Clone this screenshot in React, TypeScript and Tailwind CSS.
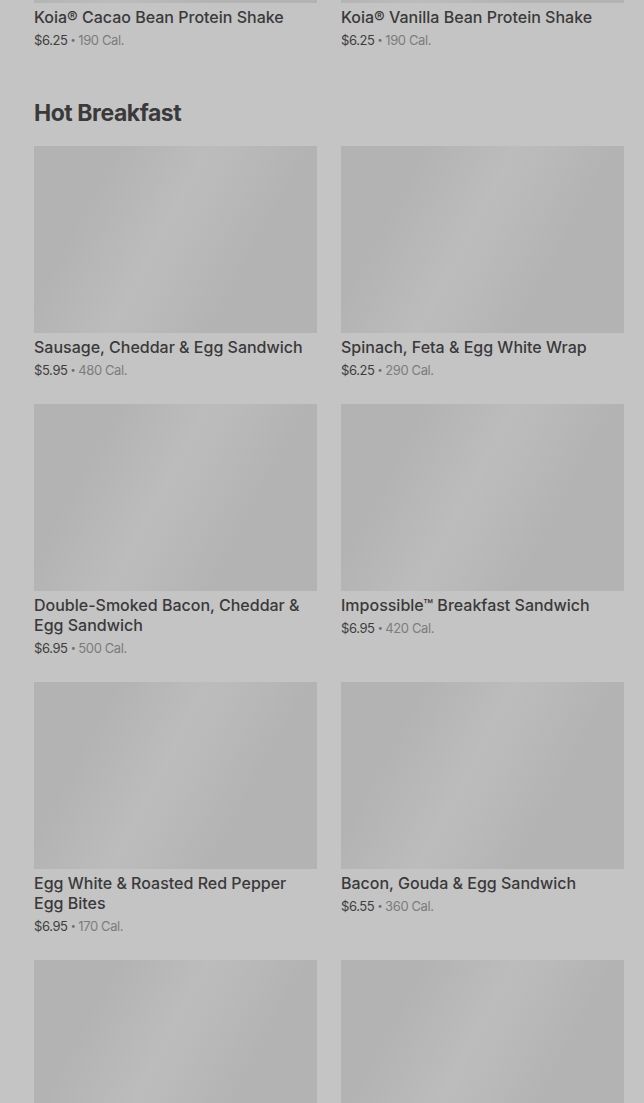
type Item = {
  name: string;
  price: string;
  cal: string;
};

const shakes: Item[] = [
  { name: "Koia® Cacao Bean Protein Shake", price: "$6.25", cal: "190 Cal." },
  { name: "Koia® Vanilla Bean Protein Shake", price: "$6.25", cal: "190 Cal." },
];

const hotBreakfast: Item[] = [
  { name: "Sausage, Cheddar & Egg Sandwich", price: "$5.95", cal: "480 Cal." },
  { name: "Spinach, Feta & Egg White Wrap", price: "$6.25", cal: "290 Cal." },
  { name: "Double-Smoked Bacon, Cheddar & Egg Sandwich", price: "$6.95", cal: "500 Cal." },
  { name: "Impossible™ Breakfast Sandwich", price: "$6.95", cal: "420 Cal." },
  { name: "Egg White & Roasted Red Pepper Egg Bites", price: "$6.95", cal: "170 Cal." },
  { name: "Bacon, Gouda & Egg Sandwich", price: "$6.55", cal: "360 Cal." },
];

function Thumb() {
  return (
    <div className="h-[187px] w-full bg-[linear-gradient(118deg,#b3b3b3_22%,#bcbcbc_46%,#b9b9b9_56%,#b3b3b3_72%)]" />
  );
}

function ItemCard({ item }: { item: Item }) {
  return (
    <div className="flex flex-col">
      <Thumb />
      <p className="mt-1 text-[16px] font-medium leading-5 text-[#3a3a3a]">{item.name}</p>
      <p className="mt-[3px] flex items-center text-[13px] leading-5 tracking-[-0.03em] text-[#3e3e3e]">
        <span>{item.price}</span>
        <span className="mx-[3px] text-[9px] text-[#6e6e6e]">•</span>
        <span className="text-[#7c7c7c]">{item.cal}</span>
      </p>
    </div>
  );
}

export default function App() {
  return (
    <div
      className="min-h-screen overflow-hidden bg-[#c4c4c4] pl-[34px] pr-5"
      style={{ fontFamily: "Inter, 'Noto Sans', sans-serif" }}
    >
      <div className="-mt-[184px] grid grid-cols-2 gap-6">
        {shakes.map((item) => (
          <ItemCard key={item.name} item={item} />
        ))}
      </div>

      <h2 className="mt-[47px] text-[23px] font-bold leading-8 tracking-[-0.02em] text-[#3a3a3a]">
        Hot Breakfast
      </h2>

      <div className="mt-[17px] grid grid-cols-2 gap-6">
        {hotBreakfast.map((item) => (
          <ItemCard key={item.name} item={item} />
        ))}
        <Thumb />
        <Thumb />
      </div>
    </div>
  );
}
